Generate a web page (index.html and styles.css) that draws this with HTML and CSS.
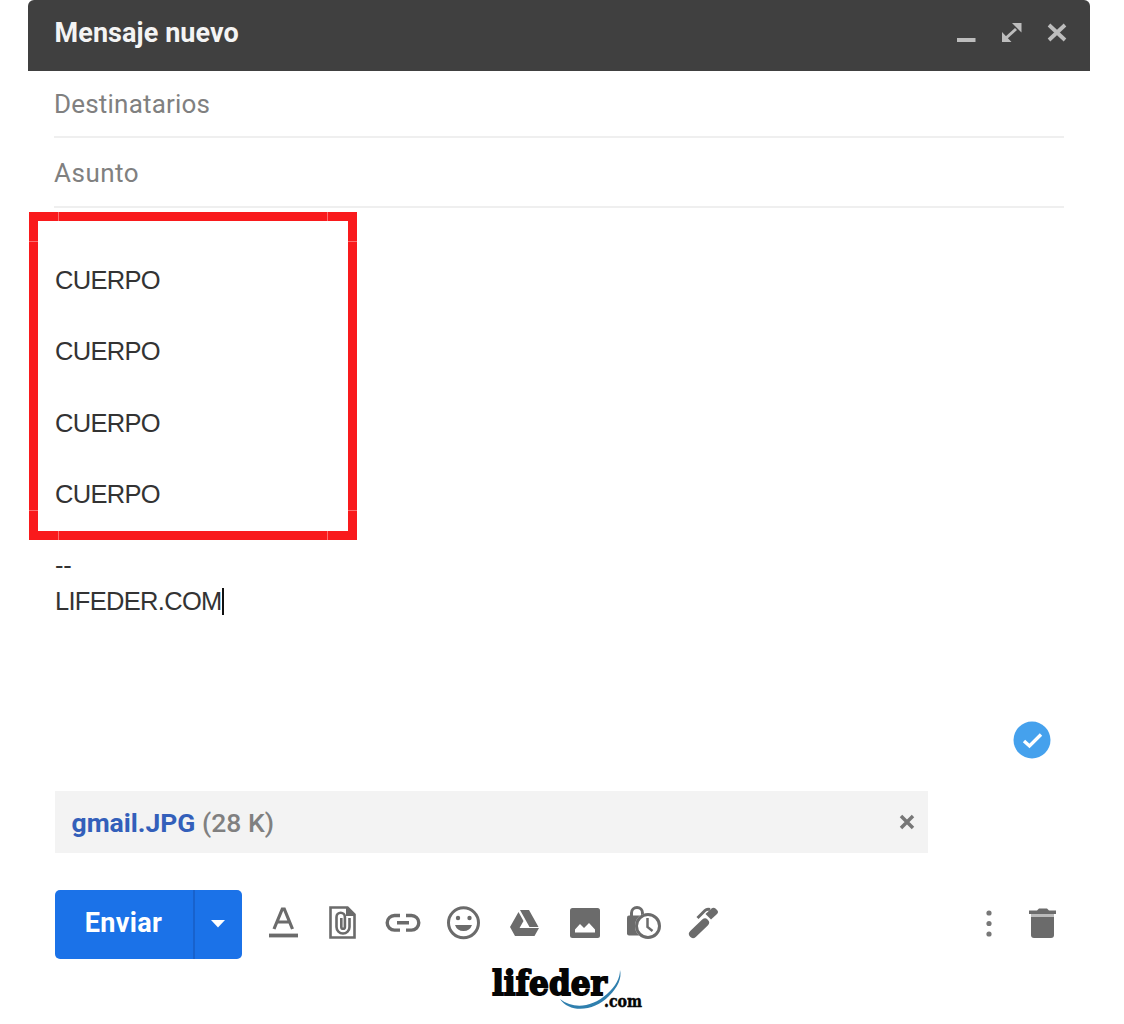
FILE: index.html
```html
<!DOCTYPE html>
<html lang="es">
<head>
<meta charset="utf-8">
<title>Mensaje nuevo</title>
<link rel="stylesheet" href="styles.css">
</head>
<body>
<main class="compose">
  <header class="titlebar">
    <h1 class="title">Mensaje nuevo</h1>
    <svg class="window-controls" width="112" height="24" viewBox="0 0 112 24">
      <path d="M1 19h18.500" stroke-width="4"/>
      <path d="M50 17 60 8" stroke-width="3"/>
      <path d="M56 2h9.500v9.500zM46 11v10h9.500z" class="solid"/>
      <path d="m93 4 16 15m0-15L93 19" stroke-width="3.800"/>
    </svg>
  </header>
  <div class="field"><span class="placeholder recipients">Destinatarios</span></div>
  <div class="field"><span class="placeholder subject">Asunto</span></div>
  <section class="body">
    <p class="line">CUERPO</p>
    <p class="line">CUERPO</p>
    <p class="line">CUERPO</p>
    <p class="line">CUERPO</p>
    <p class="signature"><span class="dashes">--</span><br>LIFEDER.COM<span class="caret"></span></p>
    <div class="highlight"><i class="seam left"></i><i class="seam right"></i><i class="seam top"></i><i class="seam bottom"></i></div>
  </section>
  <div class="status">
    <svg width="38" height="38" viewBox="0 0 38 38">
      <circle cx="19" cy="19" r="18.500" fill="#45a1ed"/>
      <path d="m11 20 5.500 5L28 13.500" fill="none" stroke="#fff" stroke-width="3.400"/>
    </svg>
  </div>
  <div class="attachment">
    <span class="file"><b class="name">gmail.JPG</b> <span class="size">(28 K)</span></span>
    <svg width="16" height="16" viewBox="0 0 16 16"><path d="m2 2 12 12m0-12L2 14" stroke="#777" stroke-width="3.500"/></svg>
  </div>
  <footer class="toolbar">
    <div class="send">
      <span class="send-label">Enviar</span>
      <span class="send-more"><svg width="14" height="8" viewBox="0 0 14 8"><path d="M0 0h14L7 7.500z" fill="#fff"/></svg></span>
    </div>
    <svg class="tools" width="460" height="40" viewBox="0 0 460 40">
      <!-- text format -->
      <path d="M1 32.500h29" class="line-icon" stroke-width="3.800"/>
      <path d="M6 26 14.300 6h2L24.500 26M9 19h12.500" class="line-icon" stroke-width="3.200"/>
      <!-- attach file -->
      <path d="M62.500 4.500h17l7 7v23h-24z" class="line-icon" stroke-width="2.600"/>
      <path d="M78 4v9h9z" class="fill-icon"/>
      <path d="M81.500 15v9a6.500 6.500 0 0 1-13 0v-10a4.200 4.200 0 0 1 8.400 0v10a1.800 1.800 0 0 1-3.600 0v-9" class="line-icon" stroke-width="2.600"/>
      <!-- link -->
      <path d="M132 12.500h-5.500a7.300 7.300 0 0 0 0 14.600h5.500M138 12.500h5.500a7.300 7.300 0 0 1 0 14.600h-5.500M129 19.800h12" class="line-icon" stroke-width="3.400"/>
      <!-- emoji -->
      <circle cx="195.500" cy="19.800" r="15" class="line-icon" stroke-width="3"/>
      <circle cx="190" cy="15" r="2.200" class="fill-icon"/><circle cx="201.500" cy="15" r="2.200" class="fill-icon"/>
      <path d="M187 22h17a9 9 0 0 1-17 0z" class="fill-icon"/>
      <!-- drive -->
      <path d="M252 7h9l9.500 17h-9zM250.500 9l5 9-8.500 15-5-9zM251.500 25h19.500l-4.500 8h-19.500z" class="fill-icon"/>
      <!-- photo -->
      <rect x="302" y="5" width="30" height="30" rx="2.500" class="fill-icon"/>
      <path d="M307 29.500v-3l5-5.500 4 4 5-5 6 6.500v3z" fill="#fff"/>
      <!-- confidential mode -->
      <rect x="359" y="12.500" width="22" height="20" rx="2" class="fill-icon"/>
      <path d="M363.500 15V10a5.500 5.500 0 0 1 11 0v5" class="line-icon" stroke-width="3"/>
      <circle cx="380" cy="23" r="13" fill="#fff"/>
      <circle cx="380" cy="23" r="11.500" fill="#fff" stroke="#6b6b6b" stroke-width="3"/>
      <path d="M379.500 15v9l5 4" class="line-icon" stroke-width="2.500"/>
      <!-- signature pen -->
      <path d="M425 31 437 19.500" class="line-icon" stroke-width="8" stroke-linecap="round"/>
      <path d="m435.500 10.500 11 10.500" stroke="#fff" stroke-width="2.500"/>
      <path d="m437.500 11 6-5.500q2-1.500 4 0l1.500 1.500q2 2 0 4l-6 5.500z" class="fill-icon"/>
      <path d="m429.500 15 7.500-7.500q2-2 5-1" class="line-icon" stroke-width="3"/>
    </svg>
    <svg class="actions" width="74" height="34" viewBox="0 0 74 34">
      <circle cx="5" cy="6" r="2.600" fill="#777"/><circle cx="5" cy="16.500" r="2.600" fill="#777"/><circle cx="5" cy="27" r="2.600" fill="#777"/>
      <path d="M45 3.500h8l2-2h8l2 2h7v3.500H45z" class="fill-icon"/>
      <path d="M47 7h23v4H47z" fill="#bbb"/>
      <path d="M47 10h23v18q0 3-3 3H50q-3 0-3-3z" class="fill-icon"/>
    </svg>
  </footer>
</main>
<div class="brand">
  <svg width="160" height="54" viewBox="0 0 160 54">
    <text x="3" y="33" textLength="115" lengthAdjust="spacingAndGlyphs" class="brand-name">lifeder</text>
    <path d="M71 37C80 51 105 50 120 34 129 25 133 16 131 8 131 16 127 24 118 32 102 46 84 47 71 37z" fill="#2f7fae"/>
    <text x="115" y="44.500" textLength="38" lengthAdjust="spacingAndGlyphs" class="brand-tld">.com</text>
  </svg>
</div>
</body>
</html>
```
FILE: styles.css
```css
* { box-sizing: border-box; }
body {
  margin: 0;
  height: 1024px;
  overflow: hidden;
  background: #fff;
  font-family: Roboto, "Liberation Sans", sans-serif;
}
p, h1 { margin: 0; }
svg { display: block; flex: none; }
.compose { width: 1062px; margin-left: 28px; }
.titlebar {
  height: 71px;
  padding: 0 22px 5px 26.500px;
  display: flex;
  align-items: center;
  justify-content: space-between;
  background: #404040;
  border-radius: 6px 6px 0 0;
}
.title { font-size: 27px; font-weight: 700; line-height: 36px; color: #f4f4f4; letter-spacing: 0.080px; }
.window-controls { fill: none; stroke: #bdbdbd; }
.window-controls .solid { fill: #bdbdbd; stroke: none; }
.field {
  height: 67px;
  margin: 0 26px;
  display: flex;
  align-items: center;
  border-bottom: 2px solid #efefef;
}
.field + .field { height: 70px; padding-top: 2px; }
.placeholder { font-size: 26px; color: #808080; }
.recipients { letter-spacing: 0.200px; }
.subject { letter-spacing: 0.500px; }
.body {
  position: relative;
  height: 510px;
  padding: 37px 27px 0;
  font-family: "Liberation Sans", Arial, sans-serif;
  font-size: 25.500px;
  letter-spacing: -0.700px;
  color: #333;
}
.line { height: 71.330px; line-height: 71.330px; }
.signature { padding-top: 18px; line-height: 35.700px; }
.dashes { letter-spacing: -0.300px; }
.caret { display: inline-block; width: 2px; height: 27px; background: #111; vertical-align: -5px; }
.highlight {
  position: absolute;
  left: 1px;
  top: 4px;
  width: 328px;
  height: 328px;
  border: 9px solid #f91a1c;
}
.seam { position: absolute; }
.seam.left, .seam.right { width: 1px; top: -9px; bottom: -9px; background: linear-gradient(#fb6d6e 9px, transparent 9px calc(100% - 9px), #fb6d6e calc(100% - 9px)); }
.seam.left { left: 20px; }
.seam.right { right: 20px; }
.seam.top, .seam.bottom { height: 1px; left: -9px; right: -9px; background: linear-gradient(90deg, #fb6d6e 9px, transparent 9px calc(100% - 9px), #fb6d6e calc(100% - 9px)); }
.seam.top { top: 20px; }
.seam.bottom { bottom: 20px; }
.status { height: 73px; padding: 3px 39px 0; display: flex; justify-content: flex-end; }
.attachment {
  width: 873px;
  height: 62px;
  margin-left: 26.500px;
  padding: 0 13px 0 17px;
  display: flex;
  align-items: center;
  justify-content: space-between;
  background: #f3f3f3;
}
.file { font-size: 26.500px; font-weight: 500; }
.name { color: #335fba; font-weight: 700; }
.size { color: #808080; }
.toolbar {
  height: 69px;
  margin: 36.500px 26px 0 26.500px;
  display: flex;
  align-items: center;
}
.send {
  display: flex;
  width: 187px;
  height: 69px;
  border-radius: 5px;
  background: #1b72e8;
  color: #fff;
}
.send-label {
  width: 138px;
  line-height: 66px;
  text-align: center;
  font-size: 27px;
  font-weight: 700;
  letter-spacing: 0.300px;
}
.send-more { flex: 1; display: flex; align-items: center; justify-content: center; border-left: 2px solid #1862cd; }
.tools { margin-left: 26px; margin-top: -2px; }
.actions { margin-left: auto; margin-right: 6px; margin-top: -1px; }
.line-icon { fill: none; stroke: #6b6b6b; }
.fill-icon { fill: #6b6b6b; }
.brand { display: flex; margin-left: 489px; margin-top: 3px; }
.brand-name, .brand-tld { font-family: "DejaVu Serif", serif; font-weight: 700; fill: #050505; }
.brand-name { font-size: 34px; stroke: #050505; stroke-width: 1.800px; }
.brand-tld { font-size: 16px; stroke: #050505; stroke-width: 0.500px; }
```
